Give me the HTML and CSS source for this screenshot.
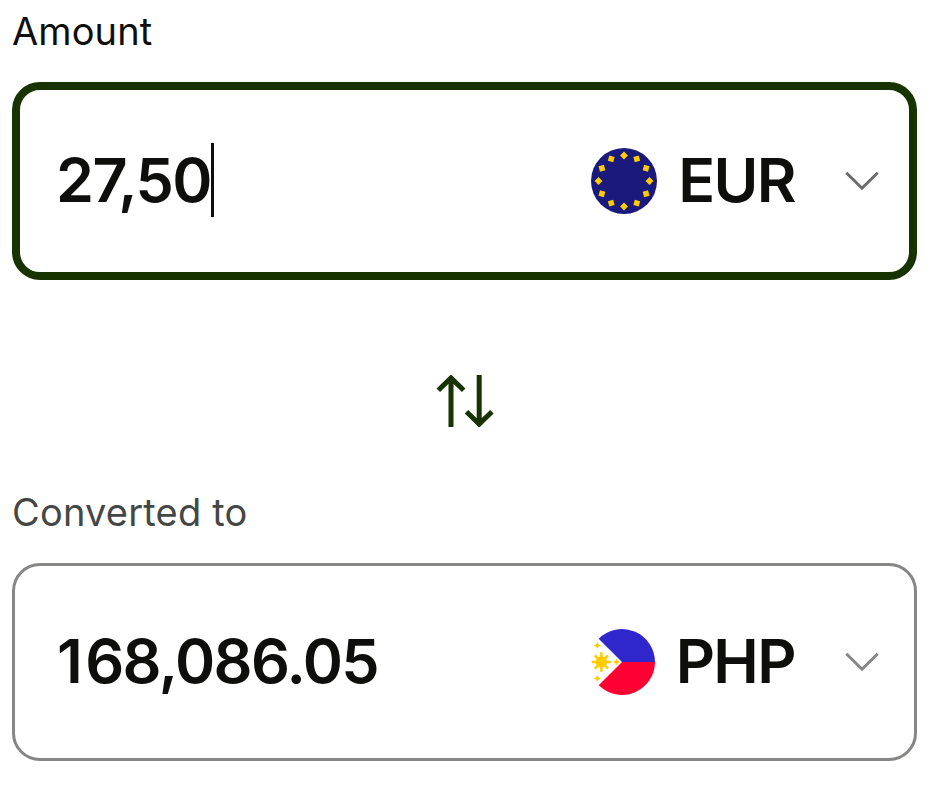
FILE: index.html
```html
<!DOCTYPE html>
<html lang="en">
<head>
    <meta charset="UTF-8">
    <meta name="viewport" content="width=device-width, initial-scale=1.0">
    <title>Currency Converter</title>
    <link rel="stylesheet" href="styles.css">
</head>
<body>

    <div class="converter">
        <div class="label">Amount</div>
        <div class="money-input focused">
            <div class="value">27,50<span class="caret"></span></div>
            <div class="currency">
                <svg class="flag" viewBox="-33 -33 66 66">
                    <defs>
                        <path id="star" d="M0 -4.1L1.5 -1.5L4.1 0L1.5 1.5L0 4.1L-1.5 1.5L-4.1 0L-1.5 -1.5Z"/>
                        <path id="euStar" d="M0 -3.9L3.9 0L0 3.9L-3.9 0Z"/>
                    </defs>
                    <circle r="33" fill="#1a1a7c"/>
                    <g fill="#ffcc00">
                        <use href="#euStar" transform="translate(0 -25.5)"/>
                        <use href="#euStar" transform="rotate(30) translate(0 -25.5)"/>
                        <use href="#euStar" transform="rotate(60) translate(0 -25.5)"/>
                        <use href="#euStar" transform="rotate(90) translate(0 -25.5)"/>
                        <use href="#euStar" transform="rotate(120) translate(0 -25.5)"/>
                        <use href="#euStar" transform="rotate(150) translate(0 -25.5)"/>
                        <use href="#euStar" transform="rotate(180) translate(0 -25.5)"/>
                        <use href="#euStar" transform="rotate(210) translate(0 -25.5)"/>
                        <use href="#euStar" transform="rotate(240) translate(0 -25.5)"/>
                        <use href="#euStar" transform="rotate(270) translate(0 -25.5)"/>
                        <use href="#euStar" transform="rotate(300) translate(0 -25.5)"/>
                        <use href="#euStar" transform="rotate(330) translate(0 -25.5)"/>
                    </g>
                </svg>
                <span class="code">EUR</span>
                <svg class="chevron" viewBox="0 0 34 20">
                    <path d="M1.3 1.7L17 17.2L32.7 1.7"/>
                </svg>
            </div>
        </div>

        <div class="swap">
            <svg class="swap-icon" viewBox="0 0 58 52">
                <path d="M15 52V3M2.3 15.2L15 2.9L27.7 15.2"/>
                <path d="M43.2 0V49M30.5 36.8L43.2 49.1L55.9 36.8"/>
            </svg>
        </div>

        <div class="label muted">Converted to</div>
        <div class="money-input">
            <div class="value"><span class="lead">1</span>68,086.05</div>
            <div class="currency">
                <svg class="flag" viewBox="-33 -33 66 66">
                    <path d="M0 0L-23.3 -23.3A33 33 0 0 1 33 0Z" fill="#2f26cc"/>
                    <path d="M0 0L-23.3 23.3A33 33 0 0 0 33 0Z" fill="#ff0033"/>
                    <g fill="#ffcc00">
                        <circle cx="-20.6" cy="0" r="5.8"/>
                        <use href="#star" transform="translate(-24.7 -16.5) scale(.82)"/>
                        <use href="#star" transform="translate(-24.7 16.5) scale(.82)"/>
                        <use href="#star" transform="translate(-5.4 0) scale(.82)"/>
                    </g>
                    <path d="M-30.3 0H-10.9M-20.6 -9.7V9.7M-27.2 -6.6L-14 6.6M-27.2 6.6L-14 -6.6" stroke="#ffcc00" stroke-width="2.6"/>
                </svg>
                <span class="code">PHP</span>
                <svg class="chevron" viewBox="0 0 34 20">
                    <path d="M1.3 1.7L17 17.2L32.7 1.7"/>
                </svg>
            </div>
        </div>
    </div>

</body>
</html>
```
FILE: styles.css
```css
* {
    box-sizing: border-box;
}

body {
    margin: 0;
    background-color: #fff;
    font-family: 'Inter', sans-serif;
    color: #0e0f0c;
}

.converter {
    width: 929px;
    padding: 7px 12px 0;
}

.label {
    height: 48px;
    margin-bottom: 27px;
    font-size: 38px;
    line-height: 48px;
    letter-spacing: 0.1px;
}

.label.muted {
    color: #454745;
    letter-spacing: 0.2px;
}

.money-input {
    display: flex;
    justify-content: space-between;
    align-items: center;
    height: 198px;
    padding: 0 35px 0 42px;
    border: 3px solid #868685;
    border-radius: 28px;
}

.money-input.focused {
    padding: 0 30px 0 36px;
    border: 8px solid #163300;
}

.value {
    display: flex;
    align-items: center;
    height: 74px;
    margin-bottom: 2px;
    font-size: 61px;
    font-weight: 600;
    line-height: 72px;
    letter-spacing: -1.6px;
}

.lead {
    margin-right: 4px;
}

.caret {
    width: 3px;
    height: 74px;
    background-color: #0e0f0c;
}

.currency {
    display: flex;
    align-items: center;
}

.flag {
    width: 66px;
    height: 66px;
    margin-right: 21px;
}

.code {
    margin: 0 50px 3px 0;
    font-size: 61px;
    font-weight: 600;
    letter-spacing: -1.6px;
}

.chevron {
    width: 34px;
    height: 20px;
    fill: none;
    stroke: #868685;
    stroke-width: 3;
}

.focused .chevron {
    stroke: #6a6c6a;
}

.swap {
    display: flex;
    justify-content: center;
    height: 208px;
    padding-top: 95px;
}

.swap-icon {
    width: 58px;
    height: 52px;
    fill: none;
    stroke: #163300;
    stroke-width: 5;
}
```
